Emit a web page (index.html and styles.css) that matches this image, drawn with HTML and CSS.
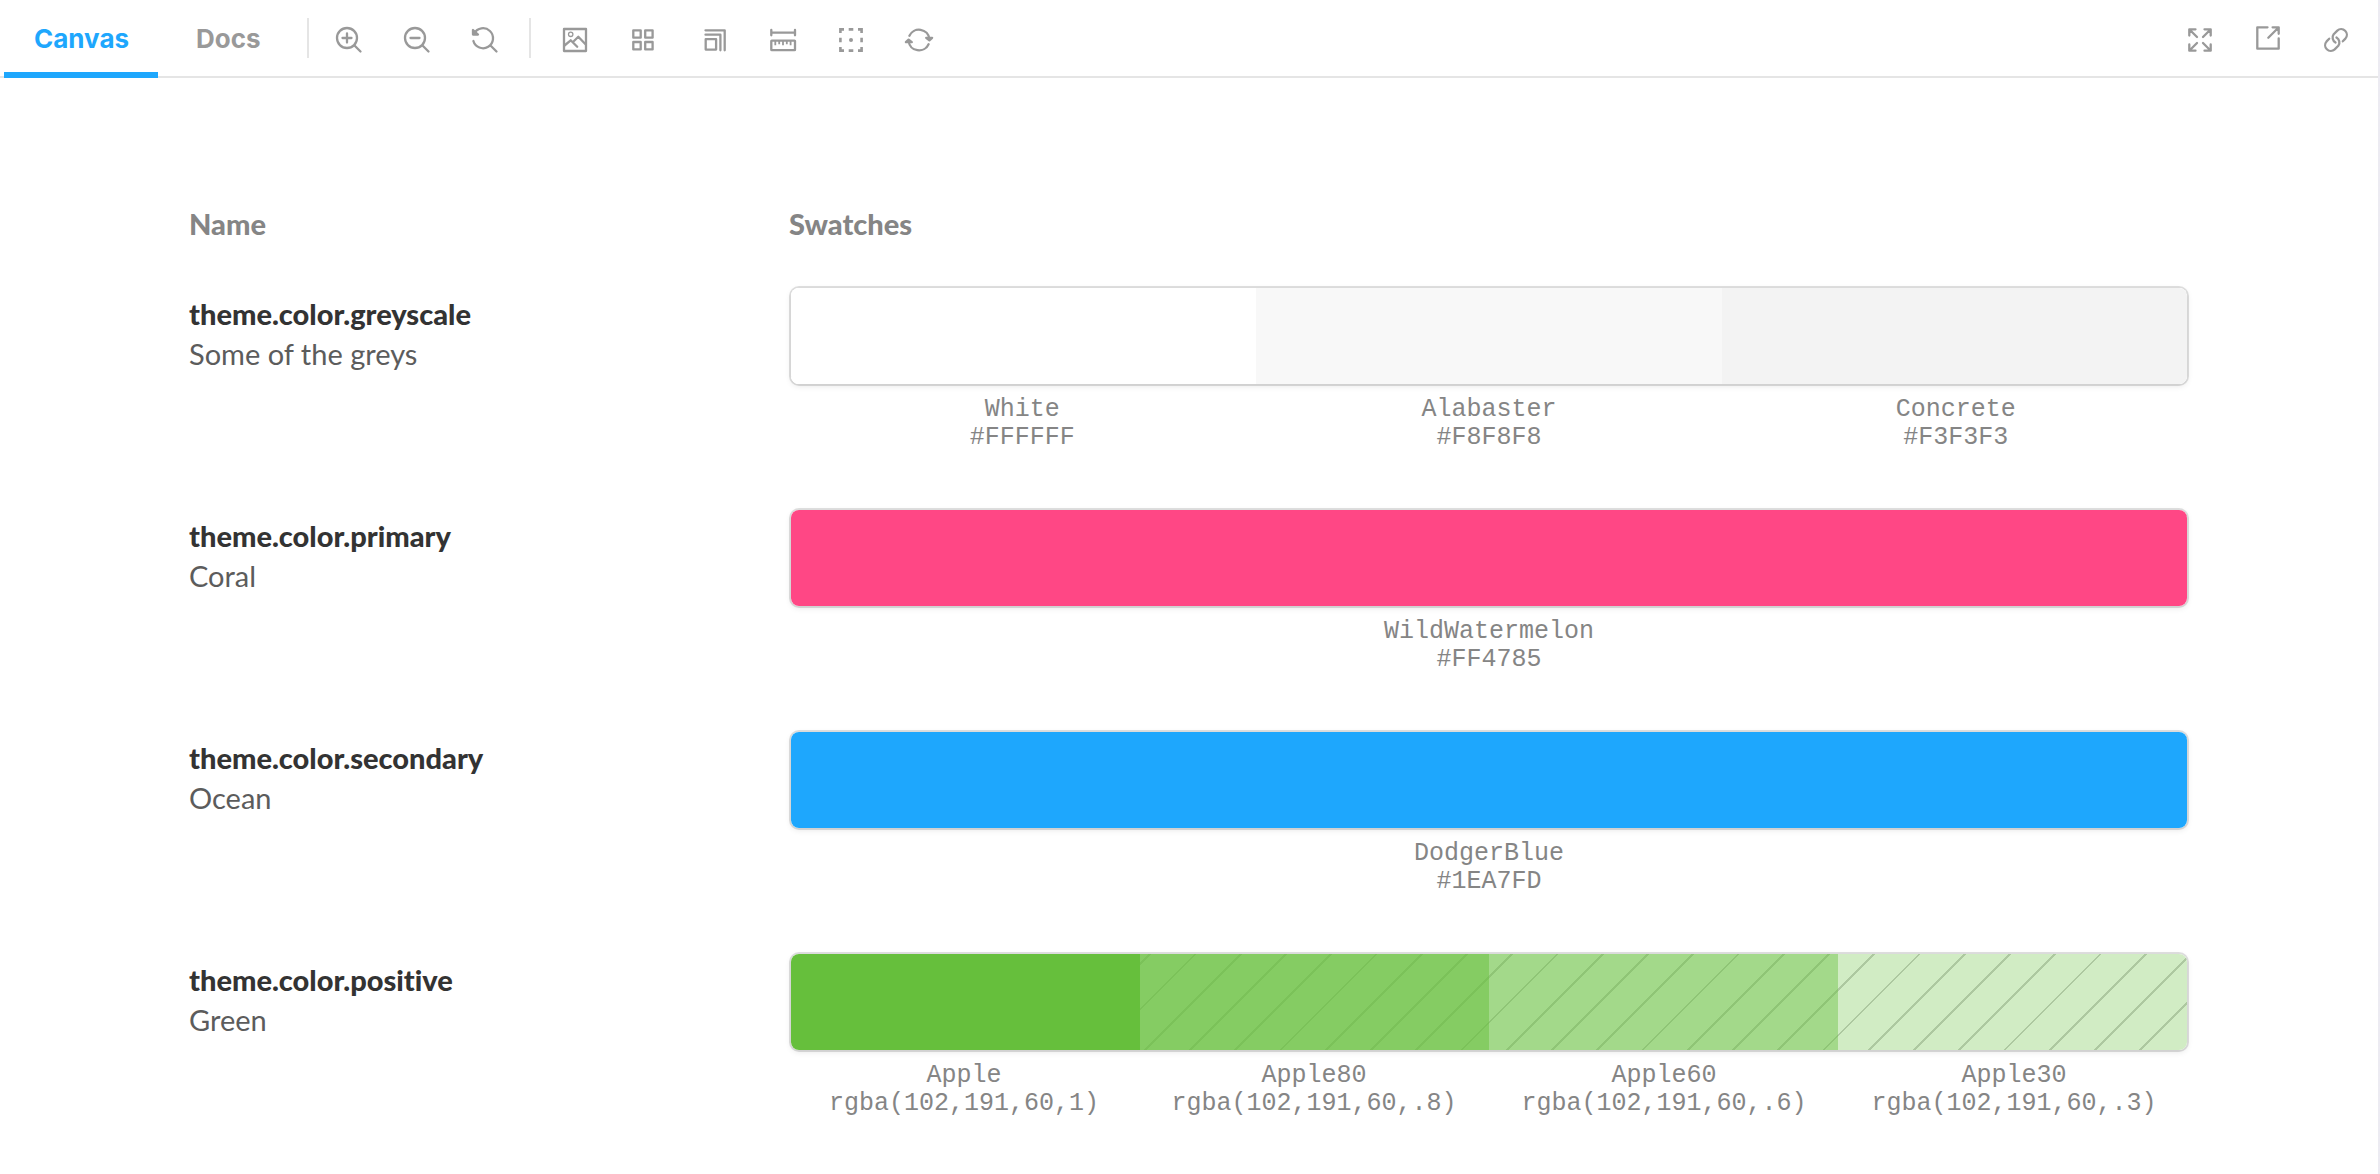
FILE: index.html
```html
<!DOCTYPE html>
<html lang="en">
<head>
<meta charset="utf-8">
<title>Color palette</title>
<link rel="stylesheet" href="styles.css">
</head>
<body>
<header class="toolbar">
  <nav class="tabs">
    <a class="tab tab-active" href="#canvas">Canvas</a>
    <a class="tab" href="#docs">Docs</a>
  </nav>
  <div class="tools">
    <span class="divider"></span>
    <button class="tool" aria-label="Zoom in"><svg viewBox="0 0 32 32"><circle cx="14" cy="16" r="10"/><path d="M9.500 16h9M14 11.500v9M21.500 23.500l6 6"/></svg></button>
    <button class="tool" aria-label="Zoom out"><svg viewBox="0 0 32 32"><circle cx="14" cy="16" r="10"/><path d="M9.500 16h9M21.500 23.500l6 6"/></svg></button>
    <button class="tool" aria-label="Reset zoom"><svg viewBox="0 0 32 32"><path d="M5.200 11.500A10 10 0 1 1 4.400 19M21.500 23.500l6 6"/><path class="solid" d="M4 8v4.500h5z"/></svg></button>
    <span class="divider divider-inset"></span>
    <button class="tool" aria-label="Change background"><svg viewBox="0 0 32 32"><rect x="5" y="7" width="22" height="22"/><circle class="thin" cx="11.700" cy="12.300" r="2.200"/><path d="M5.500 23.500l6.200-5.200 6.500 6.500M15 19l4.300-4.200 7.200 7.500"/></svg></button>
    <button class="tool" aria-label="Toggle grid"><svg viewBox="0 0 32 32"><rect x="6.300" y="8.300" width="7.400" height="7.400"/><rect x="18.200" y="8.300" width="7.400" height="7.400"/><rect x="6.300" y="20" width="7.400" height="7.400"/><rect x="18.200" y="20" width="7.400" height="7.400"/></svg></button>
    <button class="tool tool-wide" aria-label="Change viewport size"><svg viewBox="2 0 32 32"><path d="M10.500 8.300h19.200v20M10.500 12.700h14.900v15.600"/><rect x="10.700" y="17.200" width="10.400" height="10.400"/></svg></button>
    <button class="tool" aria-label="Measure"><svg viewBox="0 0 32 32"><path d="M4.300 10.700h23.600M4.300 8v5.300M28 8v5.300"/><rect x="4.300" y="18.600" width="23.700" height="9.600" rx="0.500"/><path class="medium" d="M8.300 19v4.200M12.200 19v3.200M16 19v4.200M19.800 19v3.200M23.600 19v4.200"/></svg></button>
    <button class="tool" aria-label="Toggle outlines"><svg viewBox="0 0 32 32"><path class="square" d="M9 7.400H5.400V11M13.700 7.400h4.600M23 7.400h3.600V11M5.400 15.700v4.600M26.600 15.700v4.600M5.400 25v3.600H9M13.700 28.600h4.600M23 28.600h3.600V25"/><circle class="dot" cx="16" cy="18" r="2"/></svg></button>
    <button class="tool" aria-label="Remount component"><svg viewBox="0 0 32 32"><path d="M6.400 13.800A10.500 10.500 0 0 1 26.400 17M25.600 22.200A10.500 10.500 0 0 1 5.600 19"/><path class="solid" d="M23.200 15.800l3.200 2.500 2.700-2.500zM8.800 20.200l-3.200-2.500L2.900 20.200z"/></svg></button>
  </div>
  <div class="tools tools-end">
    <button class="tool" aria-label="Go full screen"><svg viewBox="0 0 32 32"><path d="M6 8l7 7M26 8l-7 7M6 28l7-7M26 28l-7-7M11.500 7.300H5.300v6.200M20.500 7.300h6.200v6.200M11.500 28.700H5.300v-6.200M20.500 28.700h6.200v-6.200"/></svg></button>
    <button class="tool" aria-label="Open canvas in new tab"><svg viewBox="0 0 32 32"><path d="M15.500 5.300H5.300v21.400h21.400V16.300M26.300 5.700L16.300 15.700M20.600 5.300h6.100v6.500"/></svg></button>
    <button class="tool" aria-label="Copy canvas link"><svg viewBox="0 0 32 32"><path d="M22.800 19.300l2.600-2.700A5.700 5.700 0 0 0 17.300 8.600L13.700 12.200A5.700 5.700 0 0 0 15.500 20.500M9.200 16.700l-2.600 2.700A5.700 5.700 0 0 0 14.700 27.400L18.300 23.800A5.700 5.700 0 0 0 16.500 15.500"/></svg></button>
  </div>
</header>
<main class="canvas">
  <table class="palette">
    <thead>
      <tr><th class="name-column" scope="col">Name</th><th scope="col">Swatches</th></tr>
    </thead>
    <tbody>
      <tr>
        <th class="item" scope="row"><div class="item-title">theme.color.greyscale</div><div class="item-subtitle">Some of the greys</div></th>
        <td>
          <div class="swatches"><span class="white"></span><span class="alabaster"></span><span class="concrete"></span></div>
          <div class="labels"><div>White<br>#FFFFFF</div><div>Alabaster<br>#F8F8F8</div><div>Concrete<br>#F3F3F3</div></div>
        </td>
      </tr>
      <tr>
        <th class="item" scope="row"><div class="item-title">theme.color.primary</div><div class="item-subtitle">Coral</div></th>
        <td>
          <div class="swatches"><span class="watermelon"></span></div>
          <div class="labels"><div>WildWatermelon<br>#FF4785</div></div>
        </td>
      </tr>
      <tr>
        <th class="item" scope="row"><div class="item-title">theme.color.secondary</div><div class="item-subtitle">Ocean</div></th>
        <td>
          <div class="swatches"><span class="dodger"></span></div>
          <div class="labels"><div>DodgerBlue<br>#1EA7FD</div></div>
        </td>
      </tr>
      <tr>
        <th class="item" scope="row"><div class="item-title">theme.color.positive</div><div class="item-subtitle">Green</div></th>
        <td>
          <div class="swatches"><span class="apple"></span><span class="apple80"></span><span class="apple60"></span><span class="apple30"></span></div>
          <div class="labels"><div>Apple<br>rgba(102,191,60,1)</div><div>Apple80<br>rgba(102,191,60,.8)</div><div>Apple60<br>rgba(102,191,60,.6)</div><div>Apple30<br>rgba(102,191,60,.3)</div></div>
        </td>
      </tr>
    </tbody>
  </table>
</main>
</body>
</html>
```
FILE: styles.css
```css
* {
  box-sizing: border-box;
}

body {
  margin: 0;
  min-height: 100vh;
  border-right: 2px solid #ecebf2;
  background: #fff;
  color: #333;
  font-family: Lato, "Liberation Sans", sans-serif;
}

/* Toolbar */
.toolbar {
  display: flex;
  height: 78px;
  padding: 0 14px 0 4px;
  border-bottom: 2px solid #e5e5e5;
}

.tabs {
  display: flex;
  gap: 8px;
}

.tab {
  height: 78px;
  padding: 0 29px 0 30px;
  border-bottom: 6px solid transparent;
  color: #999;
  font: 700 26px/78px Inter, "Liberation Sans", sans-serif;
  text-decoration: none;
}

.tab-active {
  border-bottom-color: #1ea7fd;
  color: #1ea7fd;
}

.tools {
  display: flex;
  align-items: center;
  gap: 12px;
  margin-left: 17px;
}

.tools-end {
  margin-left: auto;
}

.divider {
  width: 2px;
  height: 40px;
  background: #e5e5e5;
}

.divider-inset {
  margin: 0 4px;
}

.tool {
  display: flex;
  align-items: center;
  justify-content: center;
  width: 56px;
  height: 56px;
  padding: 0;
  border: 0;
  background: none;
  color: #999;
  cursor: pointer;
}

.tool-wide {
  width: 60px;
}

.tool svg {
  width: 32px;
  height: 32px;
  fill: none;
  stroke: currentColor;
  stroke-width: 2.3;
  stroke-linecap: round;
  stroke-linejoin: round;
}

.tool .thin {
  stroke-width: 1.3;
}

.tool .medium {
  stroke-width: 1.8;
  stroke-linecap: butt;
}

.tool .square {
  stroke-width: 2.6;
  stroke-linecap: butt;
  stroke-linejoin: miter;
}

.tool .solid {
  fill: currentColor;
}

.tool .dot {
  fill: currentColor;
  stroke: none;
}

/* Palette */
.canvas {
  max-width: 2080px;
  margin: 0 auto;
  padding: 126px 40px 0;
}

.palette {
  width: 100%;
  border-collapse: collapse;
  table-layout: fixed;
  font-size: 29px;
  font-variant-ligatures: none;
  line-height: 40px;
}

.palette th,
.palette td {
  padding: 0;
  text-align: left;
  vertical-align: top;
}

.palette thead th {
  padding-bottom: 42px;
  color: #858585;
  font-weight: 900;
}

.name-column {
  width: 30%;
}

.palette tbody .item {
  padding-top: 8px;
}

.item-title {
  font-weight: 900;
}

.item-subtitle {
  color: #5c5c5c;
  font-weight: 400;
}

.palette tbody td {
  padding: 2px 0 56px;
}

.swatches {
  display: flex;
  height: 96px;
  margin: 0 2px;
  border-radius: 8px;
  overflow: hidden;
  background: repeating-linear-gradient(-45deg, #ccc, #ccc 2px, #fff 2px, #fff 32px);
  box-shadow: 0 2px 6px rgba(0, 0, 0, 0.1), 0 0 0 2px rgba(0, 0, 0, 0.12);
}

.swatches span {
  flex: 1;
}

.labels {
  display: flex;
  margin-top: 12px;
  color: #858585;
  font: 25px/28px "Liberation Mono", monospace;
  text-align: center;
}

.labels div {
  flex: 1;
}

.white { background: #fff; }
.alabaster { background: #f8f8f8; }
.concrete { background: #f3f3f3; }
.watermelon { background: #ff4785; }
.dodger { background: #1ea7fd; }
.apple { background: rgba(102, 191, 60, 1); }
.apple80 { background: rgba(102, 191, 60, 0.8); }
.apple60 { background: rgba(102, 191, 60, 0.6); }
.apple30 { background: rgba(102, 191, 60, 0.3); }
```
